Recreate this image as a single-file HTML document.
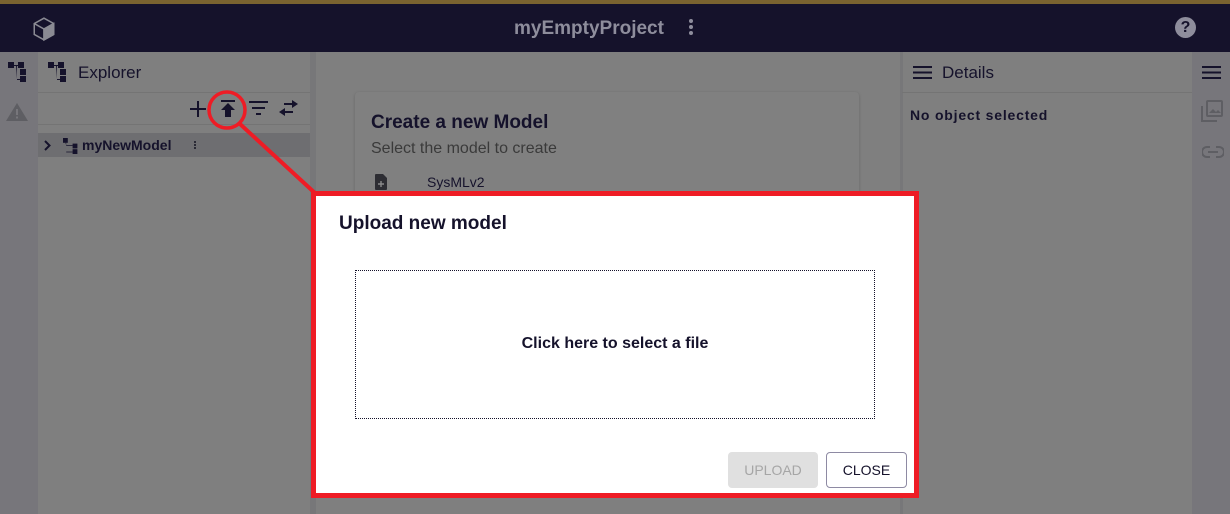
<!DOCTYPE html>
<html><head><style>
*{margin:0;padding:0;box-sizing:border-box}
body{width:1230px;height:514px;overflow:hidden;position:relative;background:#7f7f7f;font-family:"Liberation Sans",sans-serif}
.a{position:absolute}
</style></head><body>
<div class="a" style="left:0;top:0;width:1230px;height:4px;background:#7a6330"></div>
<div class="a" style="left:0;top:4px;width:1230px;height:48px;background:#15122b"></div>
<svg class="a" style="left:31px;top:16px" width="26" height="26" viewBox="0 0 24 24" fill="none" stroke="#8a8a93" stroke-width="1.4"><path d="M12 2 L21 7 L21 17 L12 22 L3 17 L3 7 Z M3 7 L12 12 L21 7 M12 12 L12 22"/><path d="M12 12 L21 7 L21 17 L12 22 Z" fill="#8a8a93"/></svg>
<div class="a" style="left:514px;top:18px;color:#8e8d9c;font-weight:bold;font-size:19px">myEmptyProject</div>
<div class="a" style="left:689px;top:19px;width:4px;height:4px;border-radius:2px;background:#8e8d9c;box-shadow:0 6px 0 #8e8d9c,0 12px 0 #8e8d9c"></div>
<div class="a" style="left:1175px;top:17px;width:21px;height:21px;border-radius:50%;background:#8e8d9c;color:#15122b;font-weight:bold;font-size:16px;text-align:center;line-height:21px">?</div>
<div class="a" style="left:0;top:52px;width:38px;height:462px;background:#77767b"></div>
<svg class="a" style="left:8px;top:62px" width="20" height="20" viewBox="0 0 20 20" fill="#15122b"><rect x="0" y="0" width="6" height="6"/><rect x="10" y="0" width="6" height="6"/><rect x="12" y="7" width="6" height="6"/><rect x="12" y="14" width="6" height="6"/><path d="M6 3h4v1H6zM8 3h1v15h4v-1H9z"/></svg>
<svg class="a" style="left:6px;top:103px" width="22" height="18" viewBox="0 0 22 18"><path d="M11 0 L22 18 L0 18Z" fill="#5e5e63"/><rect x="10" y="6" width="2" height="6" fill="#77767b"/><rect x="10" y="13.5" width="2" height="2" fill="#77767b"/></svg>
<div class="a" style="left:38px;top:52px;width:272px;height:462px;background:#7f7f7f"></div>
<div class="a" style="left:310px;top:52px;width:6px;height:462px;background:#777779"></div>
<svg class="a" style="left:48px;top:62px" width="20" height="20" viewBox="0 0 20 20" fill="#15122b"><rect x="0" y="0" width="6" height="6"/><rect x="10" y="0" width="6" height="6"/><rect x="12" y="7" width="6" height="6"/><rect x="12" y="14" width="6" height="6"/><path d="M6 3h4v1H6zM8 3h1v15h4v-1H9z"/></svg>
<div class="a" style="left:78px;top:63px;color:#15122b;font-size:17px">Explorer</div>
<div class="a" style="left:38px;top:92px;width:272px;height:1px;background:#747474"></div>
<div class="a" style="left:38px;top:124px;width:272px;height:1px;background:#747474"></div>
<svg class="a" style="left:190px;top:101px" width="16" height="16" viewBox="0 0 16 16" fill="#15122b"><rect x="7" y="0" width="2" height="16"/><rect x="0" y="7" width="16" height="2"/></svg>
<svg class="a" style="left:220px;top:100px" width="16" height="18" viewBox="0 0 16 18" fill="#15122b"><rect x="1" y="0" width="14" height="2"/><path d="M8 3 L15 10 L11 10 L11 17 L5 17 L5 10 L1 10Z"/></svg>
<svg class="a" style="left:249px;top:101px" width="19" height="14" viewBox="0 0 19 14" fill="#15122b"><rect x="0" y="0" width="19" height="2"/><rect x="3" y="6" width="13" height="2"/><rect x="7" y="12" width="5" height="2"/></svg>
<svg class="a" style="left:279px;top:100px" width="19" height="16" viewBox="0 0 19 16" fill="#15122b"><path d="M13 0 L19 4 L13 8 V5 H5 V3 H13Z M6 8 L0 12 L6 16 V13 H14 V11 H6Z"/></svg>
<div class="a" style="left:38px;top:133px;width:272px;height:24px;background:#6e6e71"></div>
<svg class="a" style="left:44px;top:140px" width="7" height="11" viewBox="0 0 7 11" fill="none" stroke="#15122b" stroke-width="2"><path d="M1 1 L5.5 5.5 L1 10"/></svg>
<svg class="a" style="left:63px;top:138px" width="16" height="16" viewBox="0 0 20 20" fill="#15122b"><rect x="0" y="0" width="6" height="6"/><rect x="12" y="7" width="6" height="6"/><rect x="12" y="14" width="6" height="6"/><path d="M3 6h1v12h8v-1H4V10h8V9H4z"/></svg>
<div class="a" style="left:82px;top:137px;color:#15122b;font-size:14px;font-weight:bold">myNewModel</div>
<div class="a" style="left:194px;top:141px;width:2px;height:2px;background:#2a2a35;box-shadow:0 3px 0 #2a2a35,0 6px 0 #2a2a35"></div>
<div class="a" style="left:355px;top:92px;width:504px;height:130px;background:#808080;border-radius:4px;box-shadow:0 1px 3px rgba(0,0,0,.2)"></div>
<div class="a" style="left:371px;top:112px;color:#15122b;font-size:19px;font-weight:bold">Create a new Model</div>
<div class="a" style="left:371px;top:140px;color:#3a3a3a;font-size:16px">Select the model to create</div>
<svg class="a" style="left:375px;top:174px" width="12" height="16" viewBox="0 0 12 16"><path d="M0 1 Q0 0 1 0 H8 L12 4 V15 Q12 16 11 16 H1 Q0 16 0 15Z" fill="#2d2d33"/><path d="M6 7v6M3 10h6" stroke="#8a8a8a" stroke-width="1.4"/></svg>
<div class="a" style="left:427px;top:174px;color:#15122b;font-size:14px">SysMLv2</div>
<div class="a" style="left:900px;top:52px;width:3px;height:462px;background:#777779"></div>
<svg class="a" style="left:913px;top:66px" width="19" height="13" viewBox="0 0 19 13" fill="#15122b"><rect y="0" width="19" height="2"/><rect y="5.5" width="19" height="2"/><rect y="11" width="19" height="2"/></svg>
<div class="a" style="left:942px;top:63px;color:#15122b;font-size:17px">Details</div>
<div class="a" style="left:902px;top:92px;width:290px;height:1px;background:#747474"></div>
<div class="a" style="left:910px;top:107px;color:#15122b;font-size:14px;font-weight:bold;letter-spacing:.8px">No object selected</div>
<div class="a" style="left:1192px;top:52px;width:38px;height:462px;background:#77767b"></div>
<svg class="a" style="left:1202px;top:66px" width="19" height="13" viewBox="0 0 19 13" fill="#15122b"><rect y="0" width="19" height="2"/><rect y="5.5" width="19" height="2"/><rect y="11" width="19" height="2"/></svg>
<svg class="a" style="left:1201px;top:100px" width="22" height="22" viewBox="0 0 22 22" fill="none" stroke="#5e5e63" stroke-width="2"><rect x="6" y="1" width="15" height="15" rx="1"/><path d="M1 6v15h15"/><path d="M8 13l4-4 3 3 2-2 3 3z" fill="#5e5e63" stroke="none"/></svg>
<svg class="a" style="left:1202px;top:146px" width="22" height="12" viewBox="0 0 22 12" fill="none" stroke="#5e5e63" stroke-width="2"><path d="M8 1H5a5 5 0 0 0 0 10h3M14 1h3a5 5 0 0 1 0 10h-3M6 6h10"/></svg>
<svg class="a" style="left:0;top:0" width="1230" height="514"><ellipse cx="227" cy="110" rx="18" ry="18" fill="none" stroke="#ee1c25" stroke-width="3.5"/><path d="M240 124 L316 194" stroke="#ee1c25" stroke-width="4"/></svg>
<div class="a" style="left:311px;top:191px;width:608px;height:307px;border:5px solid #ee1c25;background:#fff"></div>
<div class="a" style="left:339px;top:213px;color:#15122b;font-size:19px;font-weight:bold">Upload new model</div>
<div class="a" style="left:355px;top:270px;width:520px;height:149px;border:1px dotted #15122b"></div>
<div class="a" style="left:355px;top:335px;width:520px;text-align:center;color:#15122b;font-size:16px;font-weight:bold">Click here to select a file</div>
<div class="a" style="left:728px;top:452px;width:90px;height:36px;background:#e0e0e0;border-radius:4px;color:#a6a6a6;font-size:14px;text-align:center;line-height:36px">UPLOAD</div>
<div class="a" style="left:826px;top:452px;width:81px;height:36px;border:1px solid #8e8aa3;border-radius:4px;color:#15122b;font-size:14px;text-align:center;line-height:34px">CLOSE</div>
</body></html>
